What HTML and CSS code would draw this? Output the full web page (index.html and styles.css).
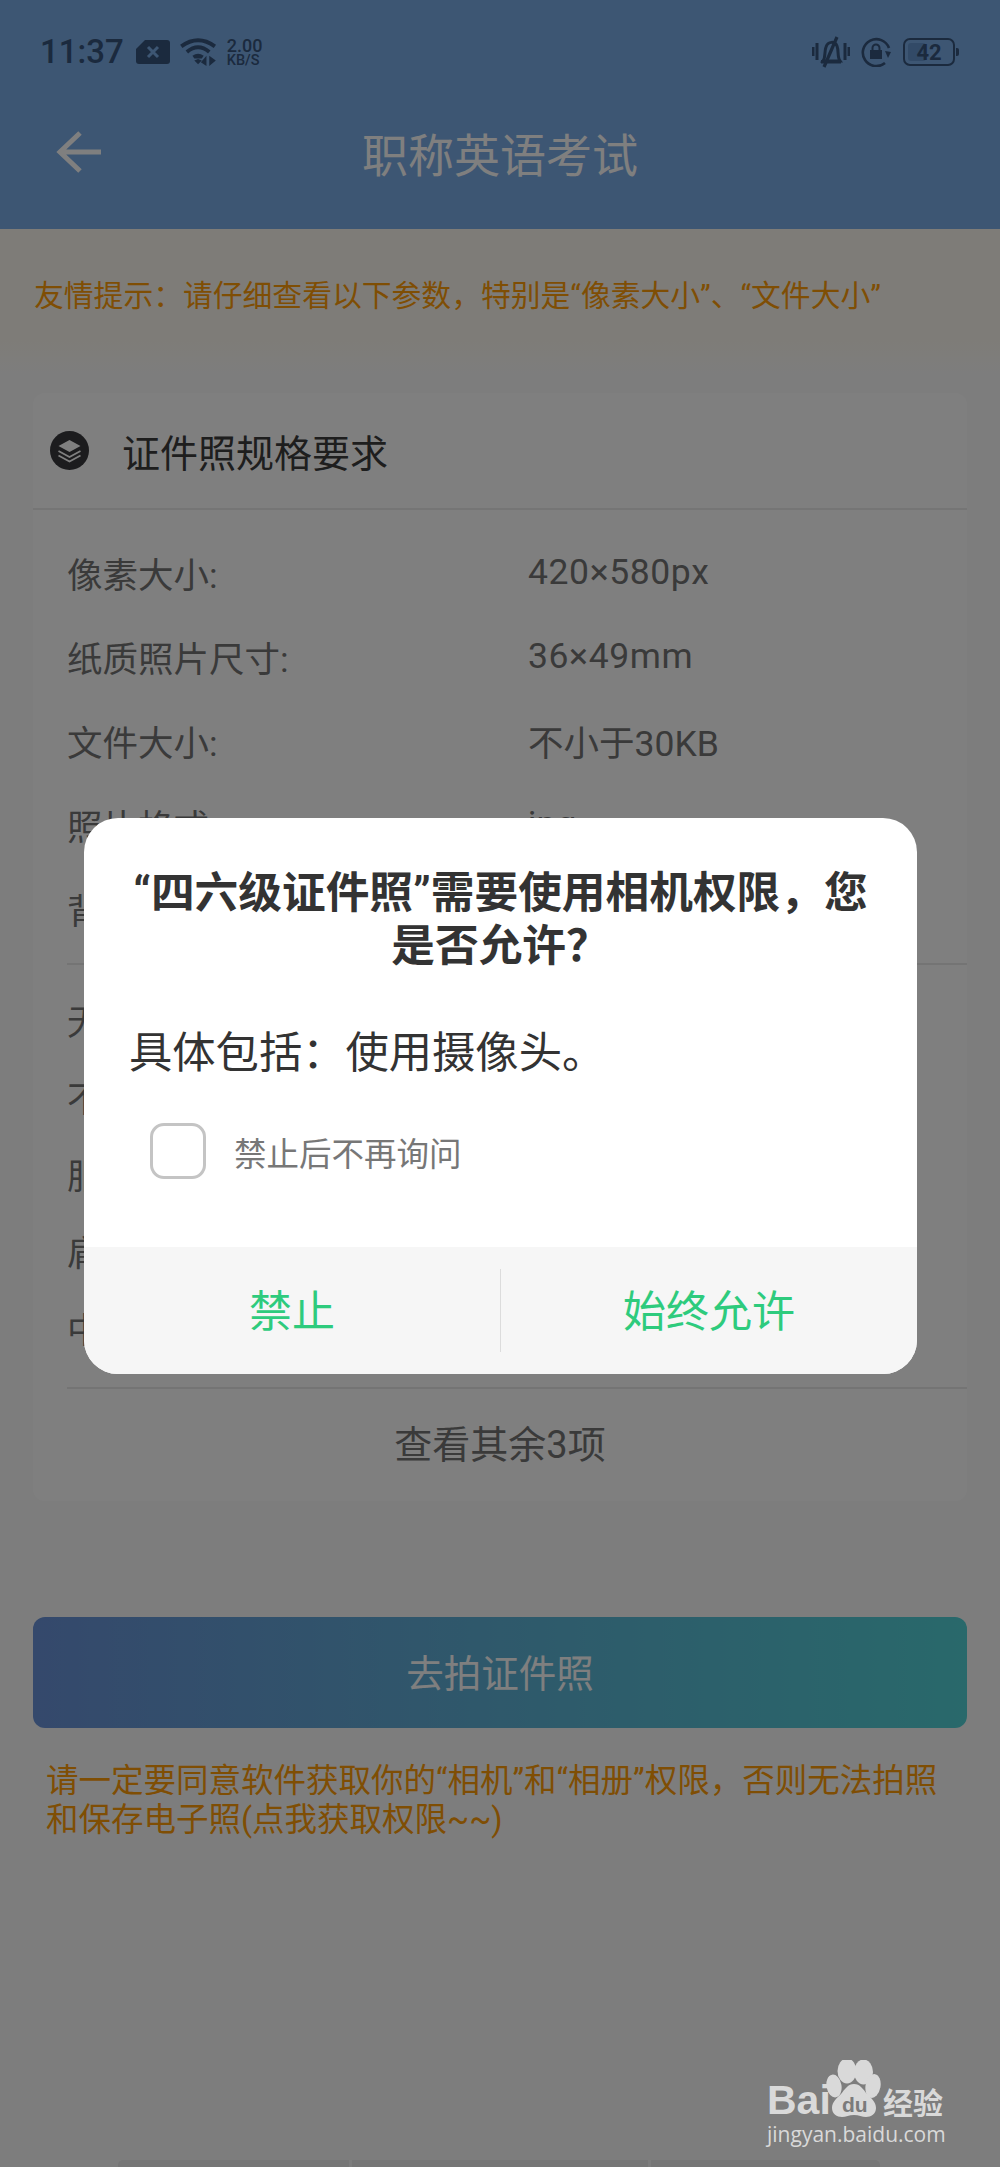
FILE: index.html
```html
<!DOCTYPE html>
<html lang="zh-CN">
<head>
    <meta charset="UTF-8">
    <meta name="viewport" content="width=device-width, initial-scale=1.0">
    <title>职称英语考试</title>
    <link rel="stylesheet" href="styles.css">
</head>
<body>
    <div class="page">
        <div class="top">
            <div class="status">
                <div class="status__left">
                    <span class="status__time">11:37</span>
                    <svg class="icon-sim" viewBox="0 0 34 24"><path d="M9 0H31a3 3 0 0 1 3 3V21a3 3 0 0 1-3 3H3a3 3 0 0 1-3-3V9z" fill="#36547c"/><path d="M12 7l10 10M22 7L12 17" stroke="#7aace6" stroke-width="3"/></svg>
                    <svg class="icon-wifi" viewBox="0 0 40 30"><g fill="none" stroke="#36547c" stroke-width="4.200"><path d="M1 9Q19-4 37 9"/><path d="M7 15Q19 5 31 15"/></g><path d="M13 19Q19 15 25 19l-2 3h-8z" fill="#36547c"/><path d="M15 24l4-1.500 4 1.500-4 4z" fill="#36547c"/><path d="M28 19v11l-6-4zM31 19v11l7-6z" fill="#36547c"/></svg>
                    <div class="speed">
                        <span class="speed__num">2.00</span>
                        <span class="speed__unit">KB/S</span>
                    </div>
                </div>
                <div class="status__right">
                    <svg class="icon-bell" viewBox="0 0 38 32"><g fill="none" stroke="#36547c" stroke-width="3"><path d="M1 11v9M5 7v17M33 7v17M37 11v9"/><path d="M11 25c3-4 1-9 3-14 2-6 9-6 11-1 2 5 0 11 3 15z"/><path d="M12 31L25 1" stroke-width="3.200"/></g><path d="M9 24h20v3.500H9z" fill="#36547c"/></svg>
                    <svg class="icon-rotate" viewBox="0 0 30 30"><path d="M24 26A13.500 13.500 0 1 1 28 11" fill="none" stroke="#36547c" stroke-width="2.600"/><path d="M24 14l6 1-3 6z" fill="#36547c"/><path d="M9 13h12v9H9z" fill="#36547c"/><path d="M11.500 13v-2a3.500 3.500 0 0 1 7 0v2" fill="none" stroke="#36547c" stroke-width="2"/></svg>
                    <div class="battery">
                        <div class="battery__fill"></div>
                        <span class="battery__num">42</span>
                    </div>
                    <div class="battery__nub"></div>
                </div>
            </div>
            <div class="nav">
                <svg class="nav__back" viewBox="0 0 46 44"><path d="M46 22H6M25 3L5 22l20 19" fill="none" stroke="#fff" stroke-width="5"/></svg>
                <div class="nav__title">职称英语考试</div>
            </div>
        </div>

        <div class="tip">友情提示&#xFF1A;请仔细查看以下参数&#xFF0C;特别是“像素大小”、“文件大小”</div>

        <div class="card">
            <div class="card__head">
                <svg class="card__icon" viewBox="0 0 39 39"><circle cx="19.500" cy="19.500" r="19.500" fill="#38383c"/><path d="M19.500 9l11 6-11 6-11-6z" fill="#fff"/><path d="M8.500 20l11 6 11-6M8.500 24.500l11 6 11-6" fill="none" stroke="#fff" stroke-width="1.800"/></svg>
                <span class="card__title">证件照规格要求</span>
            </div>
            <div class="list">
                <div class="row"><span class="row__label">像素大小:</span><span class="row__value">420×580px</span></div>
                <div class="row"><span class="row__label">纸质照片尺寸:</span><span class="row__value">36×49mm</span></div>
                <div class="row"><span class="row__label">文件大小:</span><span>不小于30KB</span></div>
                <div class="row"><span class="row__label">照片格式:</span><span>jpg</span></div>
                <div class="row"><span class="row__label">背景颜色:</span><span>白色</span></div>
            </div>
            <div class="list list--second">
                <div class="row row--short"><span class="row__label">无</span></div>
                <div class="row row--short"><span class="row__label">不</span></div>
                <div class="row row--short"><span class="row__label">服</span></div>
                <div class="row row--short"><span class="row__label">肩</span></div>
                <div class="row row--short"><span class="row__label">中</span></div>
            </div>
            <div class="card__more">查看其余3项</div>
        </div>

        <div class="submit">去拍证件照</div>
        <div class="note">请一定要同意软件获取你的“相机”和“相册”权限&#xFF0C;否则无法拍照和保存电子照(点我获取权限~~)</div>

        <div class="tiles">
            <div class="tile tile--a"></div>
            <div class="tile tile--b"></div>
            <div class="tile tile--c"></div>
        </div>
    </div>

    <div class="scrim">
        <div class="dialog">
            <div class="dialog__body">
                <div class="dialog__title">“四六级证件照”需要使用相机权限&#xFF0C;您是否允许&#xFF1F;</div>
                <div class="dialog__text">具体包括&#xFF1A;使用摄像头。</div>
                <div class="dialog__check">
                    <div class="checkbox"></div>
                    <span>禁止后不再询问</span>
                </div>
            </div>
            <div class="dialog__foot">
                <div class="dialog__btn">禁止</div>
                <div class="dialog__btn">始终允许</div>
            </div>
        </div>
    </div>

    <div class="mark">
        <div class="mark__logo">
            <span class="mark__bai">Bai</span>
            <div class="mark__paw">
                <svg viewBox="0 0 56 58"><g fill="#d9d9d9"><ellipse cx="21" cy="11" rx="9.500" ry="12.500"/><ellipse cx="37.500" cy="12" rx="9.500" ry="12.500"/><ellipse cx="8" cy="26" rx="7.500" ry="11.500" transform="rotate(-10 8 26)"/><ellipse cx="47" cy="26" rx="7.500" ry="12" transform="rotate(10 47 26)"/><path d="M28 24c6 0 9 5 13 10 4 4 9 8 9 14 0 6-5 9-10 9-4 0-7-2-12-2s-8 2-12 2c-5 0-10-3-10-9 0-6 5-10 9-14 4-5 7-10 13-10z"/></g></svg>
                <span class="mark__du">du</span>
            </div>
            <span class="mark__cn">经验</span>
        </div>
        <div class="mark__url">jingyan.baidu.com</div>
    </div>
</body>
</html>
```

FILE: styles.css
```css
* {
    box-sizing: border-box;
}
html, body {
    margin: 0;
    padding: 0;
}
body {
    position: relative;
    width: 1000px;
    height: 2167px;
    overflow: hidden;
    font-family: Roboto, "Noto Sans CJK SC", sans-serif;
    background-color: #fbfbfb;
}
.page {
    display: flex;
    flex-direction: column;
    height: 2167px;
}

/* top */
.top {
    height: 229px;
    background-color: #7aace6;
}
.status {
    display: flex;
    justify-content: space-between;
    align-items: center;
    height: 104px;
    padding: 0 41px 0 40px;
    color: #36547c;
}
.status__left, .status__right {
    display: flex;
    align-items: center;
}
.status__time {
    font-size: 33px;
    font-weight: 500;
    line-height: 40px;
}
.icon-sim {
    width: 34px;
    height: 24px;
    margin-left: 12px;
}
.icon-wifi {
    width: 38px;
    height: 28px;
    margin-left: 10px;
}
.speed {
    display: flex;
    flex-direction: column;
    margin-left: 9px;
    font-weight: 500;
}
.speed__num {
    font-size: 18px;
    line-height: 16px;
}
.speed__unit {
    font-size: 14.500px;
    line-height: 13px;
}
.icon-bell {
    width: 38px;
    height: 32px;
}
.icon-rotate {
    width: 30px;
    height: 30px;
    margin-left: 11px;
}
.battery {
    position: relative;
    display: flex;
    justify-content: center;
    align-items: center;
    width: 52px;
    height: 28px;
    margin-left: 12px;
    border: 2px solid #36547c;
    border-radius: 7px;
    font-size: 22px;
    font-weight: 700;
}
.battery__fill {
    position: absolute;
    left: 3px;
    top: 3px;
    bottom: 3px;
    width: 18px;
    background-color: #6495cf;
    border-radius: 3px;
}
.battery__num {
    position: relative;
}
.battery__nub {
    width: 3px;
    height: 8px;
    margin-left: 1px;
    background-color: #36547c;
    border-radius: 0 2px 2px 0;
}
.nav {
    position: relative;
    height: 125px;
}
.nav__back {
    position: absolute;
    left: 55px;
    top: 26px;
    width: 46px;
    height: 44px;
}
.nav__title {
    padding-top: 22px;
    font-size: 46px;
    line-height: 60px;
    text-align: center;
    color: #fff;
}

/* tip */
.tip {
    height: 146px;
    padding: 47px 0 0 34px;
    font-size: 29.800px;
    line-height: 40px;
    color: #ff9c08;
    background: linear-gradient(#fdf9f0 75%, #fbfbfb);
}

/* card */
.card {
    margin: 18px 33px 0;
    background-color: #fff;
    border-radius: 12px;
}
.card__head {
    display: flex;
    align-items: center;
    height: 117px;
    padding-left: 17px;
    border-bottom: 2px solid #eaeaea;
}
.card__icon {
    width: 39px;
    height: 39px;
}
.card__title {
    margin-left: 33px;
    font-size: 38px;
    color: #3c3c3c;
}
.list {
    margin-left: 34px;
    padding: 20px 0 13px;
    border-bottom: 2px solid #e8e8e8;
    font-size: 35.500px;
    color: #747474;
}
.list--second {
    padding: 16px 0 21px;
}
.row {
    display: flex;
    align-items: center;
    height: 84px;
}
.row--short {
    height: 77px;
}
.row__label {
    flex: 0 0 461px;
}
.row__value {
    letter-spacing: .6px;
}
.card__more {
    height: 112px;
    font-size: 38px;
    line-height: 112px;
    text-align: center;
    color: #747474;
}

/* button */
.submit {
    height: 111px;
    margin: 116px 33px 0;
    border-radius: 12px;
    font-size: 37.500px;
    line-height: 114px;
    text-align: center;
    color: #fff;
    background: linear-gradient(90deg, #6a92d8, #52d2d6);
}
.note {
    width: 900px;
    margin: 34px 0 0 46px;
    font-size: 32.500px;
    line-height: 39px;
    color: #ff9c08;
}
.tiles {
    display: flex;
    gap: 3px;
    margin-top: auto;
    padding-left: 118px;
}
.tile {
    height: 7px;
    background-color: #ececec;
}
.tile--a {
    width: 231px;
    border-radius: 5px 0 0 0;
}
.tile--b {
    width: 296px;
}
.tile--c {
    width: 229px;
    border-radius: 0 5px 0 0;
}

/* dialog */
.scrim {
    position: absolute;
    left: 0;
    top: 0;
    width: 1000px;
    height: 2167px;
    padding: 818px 83px 0 84px;
    background-color: rgba(0, 0, 0, .5);
}
.dialog {
    height: 556px;
    display: flex;
    flex-direction: column;
    background-color: #fff;
    border-radius: 34px;
    overflow: hidden;
}
.dialog__body {
    flex: 1;
    padding: 49px 45px 0;
}
.dialog__title {
    font-size: 43.700px;
    font-weight: 700;
    line-height: 53px;
    text-align: center;
    color: #333;
}
.dialog__text {
    margin-top: 51px;
    font-size: 43.300px;
    line-height: 60px;
    color: #333;
}
.dialog__check {
    display: flex;
    align-items: center;
    margin: 39px 0 0 21px;
    font-size: 32.500px;
    color: #777;
}
.checkbox {
    width: 56px;
    height: 56px;
    margin-right: 28px;
    border: 3px solid #c4c4c4;
    border-radius: 14px;
}
.dialog__foot {
    display: flex;
    align-items: center;
    height: 127px;
    background-color: #f6f6f6;
}
.dialog__btn {
    flex: 1;
    height: 83px;
    font-size: 43px;
    line-height: 87px;
    text-align: center;
    color: #2ecb7d;
}
.dialog__btn + .dialog__btn {
    border-left: 1px solid #dcdcdc;
}

/* watermark */
.mark {
    position: absolute;
    left: 767px;
    top: 2060px;
    width: 180px;
    color: #d9d9d9;
}
.mark__logo {
    position: relative;
    height: 58px;
}
.mark__bai {
    position: absolute;
    left: 0;
    top: 17px;
    font-family: "Liberation Sans", sans-serif;
    font-size: 41px;
    font-weight: 700;
    line-height: 46px;
}
.mark__paw {
    position: absolute;
    left: 59px;
    top: 0;
    width: 56px;
    height: 58px;
}
.mark__paw svg {
    display: block;
    width: 56px;
    height: 58px;
}
.mark__du {
    position: absolute;
    left: 16px;
    top: 32px;
    font-family: "Liberation Sans", sans-serif;
    font-size: 21px;
    font-weight: 700;
    line-height: 26px;
    color: #7b7b7b;
}
.mark__cn {
    position: absolute;
    left: 116px;
    top: 23px;
    font-family: "Noto Sans CJK SC", sans-serif;
    font-size: 30px;
    font-weight: 700;
    line-height: 36px;
}
.mark__url {
    margin-top: 3px;
    font-family: "Open Sans", sans-serif;
    font-size: 21px;
    line-height: 26px;
    white-space: nowrap;
}
```
